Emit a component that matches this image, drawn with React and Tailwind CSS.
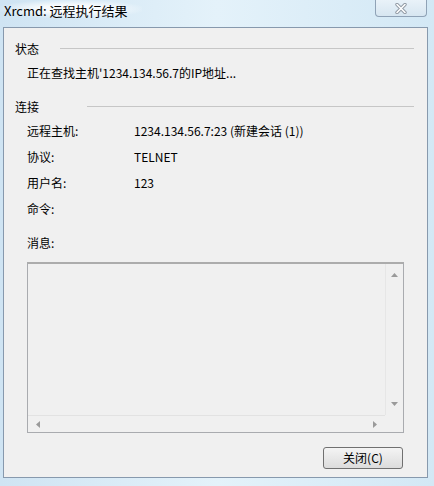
import React from 'react';

const font = { fontFamily: '"Noto Sans CJK SC", "Liberation Sans", sans-serif' };

const GroupHeader = ({ title, gap, className = '' }) => (
  <div className={`flex items-center h-[20px] pl-[11px] pr-[13px] ${className}`}>
    <span className="text-[12px] leading-none text-black">{title}</span>
    <div className={`flex-1 h-[2px] border-t border-[#c6c6c6] ${gap}`} />
  </div>
);

const InfoRow = ({ label, value }) => (
  <div className="flex items-center h-[26px] pl-[23px]">
    <span className="w-[107px] text-[12px] leading-none">{label}</span>
    <span className="text-[12px] leading-none">{value}</span>
  </div>
);

const Arrow = ({ dir }) => {
  const pts = {
    up: '0,4 3.5,0 7,4',
    down: '0,0 3.5,4 7,0',
    left: '4,0 0,3.5 4,7',
    right: '0,0 4,3.5 0,7',
  };
  const vertical = dir === 'up' || dir === 'down';
  return (
    <svg width={vertical ? 7 : 4} height={vertical ? 4 : 7} viewBox={vertical ? '0 0 7 4' : '0 0 4 7'}>
      <polygon points={pts[dir]} fill="#9a9a9a" />
    </svg>
  );
};

const App = () => {
  return (
    <div
      className="w-[434px] h-[486px] overflow-hidden flex flex-col bg-gradient-to-r from-[#cfe4f3] via-[#e4f2fa] to-[#d3e8f5]"
      style={font}
    >
      {/* Title bar */}
      <div className="h-[27px] flex items-start justify-between shrink-0">
        <span className="pl-[4px] pt-[3px] text-[13px] leading-[15px] text-black bg-[radial-gradient(ellipse_at_center,rgba(255,255,255,0.85)_30%,rgba(255,255,255,0)_75%)] pr-[14px]">
          Xrcmd: 远程执行结果
        </span>
        <div className="mr-[7px] w-[52px] h-[17px] flex items-center justify-center border border-t-0 border-[#8fa2b6] rounded-b-[4px] bg-gradient-to-b from-[#e9f2f9] to-[#d7e6f1]">
          <svg width="12" height="11" viewBox="0 0 12 11">
            <path d="M2 1.5 L10 9.5 M10 1.5 L2 9.5" stroke="#8f98a3" strokeWidth="3.4" strokeLinecap="round" />
            <path d="M2 1.5 L10 9.5 M10 1.5 L2 9.5" stroke="#ffffff" strokeWidth="1.6" strokeLinecap="round" />
          </svg>
        </div>
      </div>

      {/* Client area */}
      <div className="ml-[3px] w-[425px] h-[451px] shrink-0 border border-[#8799ad] bg-[#f0f0f0] flex flex-col">
        <GroupHeader title="状态" gap="ml-[21px]" className="mt-[11px]" />
        <div className="h-[20px] mt-[4px] pl-[23px] flex items-center text-[12px] leading-none">
          正在查找主机'1234.134.56.7的IP地址...
        </div>

        <GroupHeader title="连接" gap="ml-[48px]" className="mt-[14px]" />
        <div className="mt-[1px]">
          <InfoRow label="远程主机:" value="1234.134.56.7:23 (新建会话 (1))" />
          <InfoRow label="协议:" value="TELNET" />
          <InfoRow label="用户名:" value="123" />
          <InfoRow label="命令:" value="" />
        </div>

        <div className="mt-[11px] h-[20px] pl-[23px] flex items-center text-[12px] leading-none">消息:</div>

        {/* Message box */}
        <div className="mt-[9px] ml-[23px] w-[377px] h-[171px] border border-[#a9abaf] border-t-2 border-t-[#acacac] bg-[#f0f0f0] flex flex-col">
          <div className="flex-1 flex">
            <div className="flex-1" />
            <div className="w-[18px] flex flex-col items-center justify-between py-[9px] border-l border-[#e6e6e6] bg-[#f0f0f0]">
              <Arrow dir="up" />
              <Arrow dir="down" />
            </div>
          </div>
          <div className="h-[17px] flex">
            <div className="flex-1 flex items-center justify-between px-[8px] border-t border-[#e2e2e2]">
              <Arrow dir="left" />
              <Arrow dir="right" />
            </div>
            <div className="w-[18px] bg-[#f0f0f0]" />
          </div>
        </div>

        {/* Buttons */}
        <div className="mt-[14px] flex justify-end pr-[24px]">
          <button className="w-[80px] h-[22px] rounded-[3px] border border-[#707070] bg-gradient-to-b from-[#f4f4f4] to-[#dcdcdc] text-[12px] leading-none text-black" style={font}>
            关闭(C)
          </button>
        </div>
      </div>
    </div>
  );
};

export default App;
